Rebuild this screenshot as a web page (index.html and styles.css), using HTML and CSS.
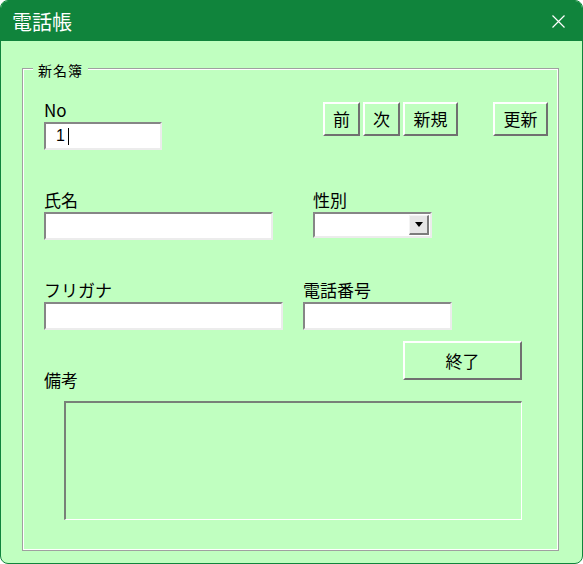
FILE: index.html
```html
<!DOCTYPE html>
<html lang="ja">
<head>
<meta charset="utf-8">
<title>電話帳</title>
<link rel="stylesheet" href="styles.css">
</head>
<body>
<div class="window">
  <div class="titlebar">
    <span class="title">電話帳</span>
    <span class="close" aria-label="閉じる">
      <svg width="13" height="13" viewBox="0 0 13 13"><path d="M0.5 0.5 L12.5 12.5 M12.5 0.5 L0.5 12.5" stroke="#ffffff" stroke-width="1.2" fill="none"/></svg>
    </span>
  </div>
  <div class="client">
    <div class="group">
      <span class="group-title">新名簿</span>
      <div class="row row1">
        <div class="field w-no">
          <label class="lbl">No</label>
          <div class="input"><span class="val">1</span><span class="caret"></span></div>
        </div>
        <div class="nav">
          <button class="btn b-prev">前</button>
          <button class="btn b-next">次</button>
          <button class="btn b-new">新規</button>
          <button class="btn b-upd">更新</button>
        </div>
      </div>
      <div class="row row2">
        <div class="field w-name">
          <label class="lbl">氏名</label>
          <div class="input"></div>
        </div>
        <div class="field w-sex">
          <label class="lbl">性別</label>
          <div class="combo"><span class="drop"><span class="tri"></span></span></div>
        </div>
      </div>
      <div class="row row3">
        <div class="field w-kana">
          <label class="lbl">フリガナ</label>
          <div class="input"></div>
        </div>
        <div class="field w-tel">
          <label class="lbl">電話番号</label>
          <div class="input"></div>
        </div>
      </div>
      <div class="row row4">
        <label class="lbl lbl-note">備考</label>
        <button class="btn b-end">終了</button>
      </div>
      <div class="memo"></div>
    </div>
  </div>
</div>
</body>
</html>
```
FILE: styles.css
```css
* { box-sizing: border-box; }
html, body { margin: 0; padding: 0; background: #ffffff; }
body { font-family: "Noto Sans CJK JP", "Noto Sans", sans-serif; color: #000; }

.window {
  width: 583px;
  height: 564px;
  border: 1px solid #10843c;
  border-radius: 8px;
  overflow: hidden;
  background: #c0ffc0;
  display: flex;
  flex-direction: column;
}

.titlebar {
  height: 40px;
  flex: none;
  background: #10843c;
  display: flex;
  align-items: center;
  justify-content: space-between;
  padding: 1px 17px 0 11px;
}
.title {
  color: #ffffff;
  font-size: 20px;
  line-height: 24px;
}
.close { display: flex; margin-top: 0; }

.client {
  flex: 1;
  padding: 27px 0 0 21px;
}

.group {
  position: relative;
  width: 537px;
  height: 483px;
  border: 1px solid #a0a0a0;
  box-shadow: inset 0 0 0 1px #ffffff;
  padding: 31px 0 0 21px;
}
.group-title {
  position: absolute;
  top: -7px;
  left: 10px;
  padding: 0 5px 0 5px;
  background: #c0ffc0;
  font-size: 14px;
  line-height: 16px;
  letter-spacing: 1px;
}

.row { display: flex; align-items: flex-start; }
.row2 { margin-top: 40px; gap: 40px; }
.row3 { margin-top: 40px; gap: 20px; }
.row4 { margin-top: 11px; width: 478px; justify-content: space-between; }

.field { display: flex; flex-direction: column; gap: 2px; }
.lbl { display: block; font-size: 17px; line-height: 20px; height: 20px; }
.lbl-note { margin-top: 29px; }

.w-no { width: 118px; }
.w-name { width: 229px; }
.w-sex { width: 119px; }
.w-kana { width: 239px; }
.w-tel { width: 149px; }

.input {
  height: 28px;
  background: #ffffff;
  border-style: solid;
  border-width: 2px;
  border-color: #868686 #ececec #ececec #868686;
  display: flex;
  align-items: center;
  padding-left: 10px;
}
.val { font-size: 16px; line-height: 18px; font-family: "Liberation Sans", sans-serif; }
.caret { width: 1px; height: 17px; background: #000; margin-left: 3px; }

.combo {
  height: 26px;
  background: #ffffff;
  border-style: solid;
  border-width: 2px;
  border-color: #868686 #ececec #ececec #868686;
  display: flex;
  justify-content: flex-end;
  align-items: center;
  padding-right: 1px;
}
.drop {
  width: 20px;
  height: 20px;
  background: #e6e6e6;
  border-style: solid;
  border-width: 1px 2px 2px 1px;
  border-color: #f4f4f4 #7c7c7c #7c7c7c #f4f4f4;
  display: flex;
  align-items: center;
  justify-content: center;
}
.tri {
  width: 0; height: 0;
  border-left: 4px solid transparent;
  border-right: 4px solid transparent;
  border-top: 5px solid #000;
}

.nav { display: flex; margin-left: 161px; margin-top: 2px; }
.btn {
  font-family: "Noto Sans CJK JP", sans-serif;
  font-size: 17px;
  line-height: 20px;
  color: #000;
  background: #c0ffc0;
  border-style: solid;
  border-width: 2px;
  border-color: #ffffff #707070 #707070 #ffffff;
  padding: 0;
  height: 34px;
  display: flex;
  align-items: center;
  justify-content: center;
}
.b-prev { width: 37px; }
.b-next { width: 37px; margin-left: 3px; }
.b-new { width: 55px; margin-left: 3px; }
.b-upd { width: 55px; margin-left: 35px; }
.b-end { width: 119px; height: 39px; }

.memo {
  margin: 11px 0 0 20px;
  width: 458px;
  height: 119px;
  border-style: solid;
  border-width: 2px 1px 1px 2px;
  border-color: #788078 #ffffff #ffffff #788078;
  background: #c0ffc0;
}
```
